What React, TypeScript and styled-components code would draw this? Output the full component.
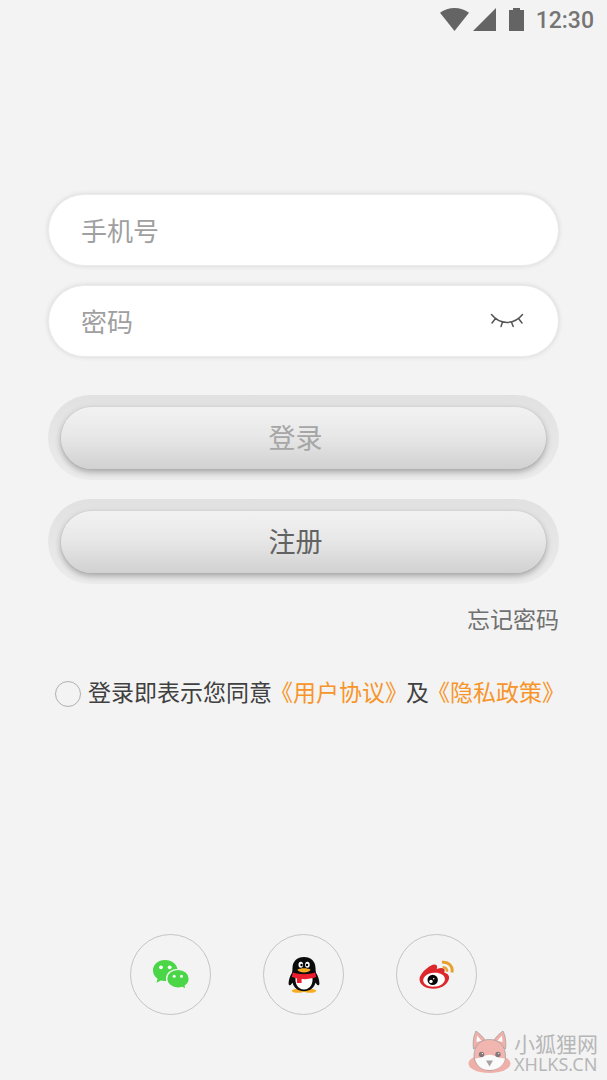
import React, { useState } from "react";
import styled, { createGlobalStyle } from "styled-components";

const GlobalStyle = createGlobalStyle`
  *, *::before, *::after { box-sizing: border-box; }
  body {
    margin: 0;
    background: #f3f3f3;
    font-family: Roboto, "Noto Sans CJK SC", sans-serif;
    color: #404040;
  }
  button, input { font-family: "Noto Sans CJK SC", sans-serif; }
`;

const Page = styled.div`
  display: flex;
  flex-direction: column;
  min-height: 100vh;
  background: #f3f3f3;
`;

const StatusBar = styled.header`
  display: flex;
  align-items: center;
  justify-content: flex-end;
  height: 40px;
  padding-right: 13px;
  color: #646464;
`;

const StatusIcons = styled.svg`
  display: block;
  margin-right: 11px;
`;

const Clock = styled.time`
  padding-top: 1px;
  font: 500 23px/39px Roboto, sans-serif;
  color: #757575;
`;

const LoginForm = styled.form`
  display: flex;
  flex-direction: column;
  padding: 154px 48px 0;
`;

const Field = styled.div`
  display: flex;
  align-items: center;
  height: 72px;
  margin-bottom: 19px;
  padding: 0 33px 0 32px;
  border-radius: 36px;
  background: #fff;
  border: 1px solid #ebebeb;
  box-shadow: 0 0 5px rgba(0, 0, 0, 0.12);
`;

const FieldInput = styled.input`
  flex: 1;
  min-width: 0;
  height: 60px;
  padding: 0 0 2px;
  border: 0;
  outline: 0;
  background: transparent;
  color: #444;
  font-size: 26px;
  &::placeholder { color: #a0a0a0; opacity: 1; }
`;

const EyeButton = styled.button`
  display: flex;
  padding: 0;
  border: 0;
  background: none;
  cursor: pointer;
`;

const Actions = styled.div`
  display: flex;
  flex-direction: column;
  gap: 19px;
  padding-top: 19px;
`;

const Track = styled.div`
  padding: 12px 13px 11px;
  border-radius: 43px;
  background: linear-gradient(#e1e1e1, #e6e6e6 50%, #ebebeb);
`;

const PillButton = styled.button<{ $muted?: boolean }>`
  display: block;
  width: 100%;
  height: 62px;
  padding: 0 16px 2px 0;
  border: 0;
  border-radius: 31px;
  background: linear-gradient(#f2f2f2, #e8e8e8 45%, #d1d1d1);
  box-shadow: 0 3px 6px rgba(0, 0, 0, 0.3), 0 0 1px rgba(0, 0, 0, 0.22);
  color: ${(p) => (p.$muted ? "#a6a6a6" : "#626262")};
  font-size: 27px;
  line-height: 40px;
  cursor: pointer;
`;

const ForgotLink = styled.a`
  align-self: flex-end;
  margin-top: 20px;
  color: #707070;
  font-size: 23px;
  line-height: 34px;
  text-decoration: none;
`;

const Terms = styled.div`
  display: flex;
  align-items: center;
  margin: 39px 0 0 7px;
  font-size: 23px;
  line-height: 34px;
  white-space: nowrap;
`;

const AgreeBox = styled.input`
  flex: none;
  appearance: none;
  width: 26px;
  height: 26px;
  margin: 0 7px 0 0;
  border: 1px solid #b0b0b0;
  border-radius: 50%;
  &:checked { background: #f7931e; box-shadow: inset 0 0 0 5px #f3f3f3; }
`;

const TermsLink = styled.a`
  margin: 0 -2px;
  color: #f7952a;
  text-decoration: none;
`;

const SocialList = styled.nav`
  display: flex;
  justify-content: center;
  gap: 52px;
  margin-top: auto;
  padding-top: 60px;
`;

const SocialButton = styled.button`
  display: flex;
  align-items: center;
  justify-content: center;
  width: 81px;
  height: 81px;
  padding: 0;
  border: 1px solid #c4c4c4;
  border-radius: 50%;
  background: none;
  cursor: pointer;
`;

const SiteMark = styled.footer`
  display: flex;
  align-items: center;
  align-self: flex-end;
  gap: 3px;
  margin-top: 14px;
  padding: 0 9px 5px 0;
  color: #b7b7b7;
`;

const SiteText = styled.div`
  display: flex;
  flex-direction: column;
`;

const SiteName = styled.span`
  font: 400 21px/23px "Noto Sans CJK SC", sans-serif;
`;

const SiteAddress = styled.span`
  font: 400 18px/18px "Noto Sans", sans-serif;
`;

const WeChatIcon = () => (
  <svg width="38" height="32" viewBox="0 0 38 32" aria-hidden="true">
    <path fill="#4bd648" d="M13 1C6 1 1 5.600 1 11.500c0 3.300 1.700 6.200 4.600 8.200l-1.100 4 4.400-2.300c1.700.500 4.100.700 6 .300C20 21 25.500 17 25.500 11.500 25.500 5.600 20 1 13 1z" />
    <path fill="#4bd648" stroke="#f3f3f3" strokeWidth="1.400" d="M26 10.400c6.400 0 11.300 4 11.300 9.300 0 2.900-1.500 5.400-4 7.100l.9 3.600-4-1.900c-1.300.4-2.700.6-4.200.6-6.400 0-11.400-4.100-11.400-9.400s5-9.300 11.400-9.300z" />
    <g fill="#f8fff8">
      <circle cx="9" cy="8.300" r="1.900" />
      <circle cx="17.700" cy="8.300" r="1.900" />
      <circle cx="22.200" cy="17.200" r="1.500" />
      <circle cx="29.500" cy="17.200" r="1.500" />
    </g>
  </svg>
);

const QQIcon = () => (
  <svg width="32" height="38" viewBox="0 0 32 38" aria-hidden="true">
    <ellipse cx="10" cy="34.800" rx="6.300" ry="2" fill="#f8ad20" />
    <ellipse cx="22" cy="34.800" rx="6.300" ry="2" fill="#f8ad20" />
    <path fill="#0b0b0b" d="M16 1C9 1 4.500 5.500 4.500 12c0 2-.2 3.600-.6 5C1.800 20.300.6 24.500.6 27.200c0 1.600.6 2.400 1.400 2.100.9-.3 1.700-1.500 2.400-2.800C6 32 10.300 35.200 16 35.200S26 32 27.600 26.500c.7 1.300 1.500 2.500 2.400 2.800.8.3 1.400-.5 1.400-2.100 0-2.700-1.200-6.900-3.300-10.200-.4-1.400-.6-3-.6-5C27.500 5.500 23 1 16 1z" />
    <path fill="#fff" d="M8 19h16c2 8-1.500 14.500-8 14.500S6 27 8 19z" />
    <ellipse cx="12.800" cy="8.800" rx="2.300" ry="3" fill="#fff" />
    <ellipse cx="19.400" cy="8.800" rx="2.300" ry="3" fill="#fff" />
    <circle cx="13.500" cy="9" r="1.200" />
    <circle cx="19" cy="9" r="1.200" />
    <path fill="#f8ad20" d="M9.300 13.700c3-2 10.400-2 13.400 0-1.300 1.900-3.700 2.700-6.700 2.700s-5.400-.8-6.700-2.700z" />
    <path fill="#eb1e2d" d="M4.800 16.600c6.800 2.200 15.600 2.200 22.400 0l.9 4.500c-4.700 1.800-9.600 2.300-14.500 2v3.900H8.900v-4.600l-5-1.300z" />
  </svg>
);

const WeiboIcon = () => (
  <svg width="36" height="30" viewBox="0 0 36 30" aria-hidden="true">
    <path fill="#dc282d" d="M11.700 5.700C14 4.300 16.500 4 17.500 5.200c.8.900.7 2.400.2 3.900 3.200-1.300 6-1.600 7.300-.3 1 1 .7 2.500.2 3.600 2.700.7 4.900 2.300 4.900 4.900 0 6-6.700 11.400-15.600 11.400C6.400 28.700.5 24.800.5 19c0-4.600 6.600-10.800 11.200-13.300z" />
    <path fill="#fff" d="M14.800 12.800c6-.5 10.900 2.100 11.100 6.100.2 4-4.500 7.400-10.500 7.700-6 .4-11-2.200-11.200-6.100-.2-3.800 4.600-7.300 10.600-7.700z" />
    <circle cx="13.700" cy="19.900" r="5.200" fill="#080808" />
    <circle cx="12" cy="21.400" r="1.700" fill="#fff" />
    <circle cx="14.700" cy="18.700" r=".8" fill="#fff" />
    <path fill="none" stroke="#e6a02c" strokeWidth="3" d="M23 2.300c6.400-1.100 11.400 4.100 9.900 10.200" />
    <path fill="none" stroke="#e6a02c" strokeWidth="2.400" d="M23.600 7.400c3-.4 4.900 1.700 4.300 4.400" />
  </svg>
);

const FoxIcon = () => (
  <svg width="43" height="46" viewBox="0 0 43 46" aria-hidden="true">
    <ellipse cx="21.500" cy="34.500" rx="21" ry="9.500" fill="#efb0aa" />
    <g stroke="#aaa09e" strokeWidth=".8">
      <path fill="#efb0aa" d="M5.500 20C4.500 12 6 6 8 2c4 3 7.500 6.300 9.500 10z" />
      <path fill="#efb0aa" d="M37.500 20C38.500 12 37 6 35 2c-4 3-7.500 6.300-9.500 10z" />
      <path fill="#f2b6b0" d="M21.500 10.500C11 10.500 6 18 6 27c0 8 7 14.500 15.500 14.500S37.500 35 37.500 27c0-9-5.500-16.500-16-16.500z" />
    </g>
    <path fill="#fff" d="M8.500 13 9 6.500l4.500 5.300zM34.500 13 34 6.500l-4.500 5.300z" />
    <path fill="#fafafa" d="M7 29.500c5 .3 10-3.700 14.500-3.700S31.500 29.800 37 29.500C36 36.500 29.500 41 21.500 41S8.500 36.500 7 29.500z" />
    <g fill="#83777a">
      <circle cx="13.500" cy="25.500" r="2.700" />
      <circle cx="30" cy="25.500" r="2.700" />
    </g>
    <circle cx="14.300" cy="24.600" r=".7" fill="#fff" />
    <circle cx="30.800" cy="24.600" r=".7" fill="#fff" />
    <path fill="#aaa3a3" d="M18 31.500h7l-3.500 6z" />
  </svg>
);

export default function App() {
  const [visible, setVisible] = useState(false);
  return (
    <Page>
      <GlobalStyle />
      <StatusBar>
        <StatusIcons width="85" height="24" viewBox="0 0 85 24" fill="currentColor" aria-hidden="true">
          <path d="M0 4.800C8 -1.600 21 -1.600 29 4.800L14.500 23z" />
          <path d="M56 0v23H33z" />
          <path d="M69 2h4V0h7v2h4v21H69z" />
        </StatusIcons>
        <Clock>12:30</Clock>
      </StatusBar>

      <LoginForm onSubmit={(e) => e.preventDefault()}>
        <Field>
          <FieldInput type="tel" placeholder="手机号" aria-label="手机号" />
        </Field>
        <Field>
          <FieldInput type={visible ? "text" : "password"} placeholder="密码" aria-label="密码" />
          <EyeButton type="button" aria-label="显示密码" onClick={() => setVisible(!visible)}>
            <svg width="36" height="18" viewBox="0 0 36 18" fill="none" stroke="#555" strokeWidth="1.500" strokeLinecap="round">
              <path d="M2.500 2.500C11 13 25 13 33.500 2.500M6.500 6.500 3 11M13.500 10.300 12 14.500M22.500 10.300 24.200 14.500M29.500 6.500 33 11" />
            </svg>
          </EyeButton>
        </Field>
        <Actions>
          <Track>
            <PillButton type="submit" $muted>登录</PillButton>
          </Track>
          <Track>
            <PillButton type="button">注册</PillButton>
          </Track>
        </Actions>
        <ForgotLink href="#forgot">忘记密码</ForgotLink>
        <Terms>
          <AgreeBox type="checkbox" id="agree" />
          <label htmlFor="agree">登录即表示您同意</label>
          <TermsLink href="#agreement">《用户协议》</TermsLink>
          <span>及</span>
          <TermsLink href="#privacy">《隐私政策》</TermsLink>
        </Terms>
      </LoginForm>

      <SocialList aria-label="第三方登录">
        <SocialButton type="button" aria-label="微信"><WeChatIcon /></SocialButton>
        <SocialButton type="button" aria-label="QQ"><QQIcon /></SocialButton>
        <SocialButton type="button" aria-label="微博"><WeiboIcon /></SocialButton>
      </SocialList>

      <SiteMark>
        <FoxIcon />
        <SiteText>
          <SiteName>小狐狸网</SiteName>
          <SiteAddress>XHLKS.CN</SiteAddress>
        </SiteText>
      </SiteMark>
    </Page>
  );
}
